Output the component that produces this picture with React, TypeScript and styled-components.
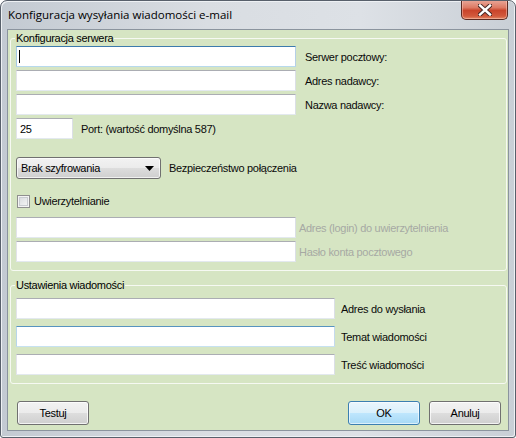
import styled, { createGlobalStyle, css } from 'styled-components'

const GlobalStyle = createGlobalStyle`
	html, body {
		margin: 0;
		padding: 0;
		background: #ffffff;
	}
	body {
		font-family: "Liberation Sans", Arial, sans-serif;
		font-size: 11px;
		letter-spacing: -0.3px;
		color: #000000;
	}
`

type BoxState = 'normal' | 'focus' | 'hover'

export default function App() {
	return (
		<>
			<GlobalStyle />
			<Window>
				<TitleBar>
					<TitleText>Konfiguracja wysyłania wiadomości e-mail</TitleText>
					<CloseBtn>
						<svg width='14' height='12' viewBox='0 0 14 12'>
							<path d='M2 1.5 L12 10.5 M12 1.5 L2 10.5' stroke='#4a2a26' strokeWidth='4.4' strokeLinecap='square' />
							<path d='M2 1.5 L12 10.5 M12 1.5 L2 10.5' stroke='#ffffff' strokeWidth='2.4' strokeLinecap='square' />
						</svg>
					</CloseBtn>
				</TitleBar>
				<Client>
					<Group $top={1}>
						<Legend>Konfiguracja serwera</Legend>
						<Row $gap={9}>
							<TextBox $w={280} $state='focus'>
								<Caret />
							</TextBox>
							<Label>Serwer pocztowy:</Label>
						</Row>
						<Row $gap={9} $mt={3}>
							<TextBox $w={280} />
							<Label>Adres nadawcy:</Label>
						</Row>
						<Row $gap={9} $mt={3}>
							<TextBox $w={280} />
							<Label>Nazwa nadawcy:</Label>
						</Row>
						<Row $gap={8} $mt={3}>
							<TextBox $w={57}>25</TextBox>
							<Label>Port: (wartość domyślna 587)</Label>
						</Row>
						<Row $gap={8} $mt={18}>
							<Combo>
								<span>Brak szyfrowania</span>
								<svg width='9' height='5' viewBox='0 0 9 5'>
									<path d='M0 0 H9 L4.5 5 Z' fill='#000000' />
								</svg>
							</Combo>
							<Label>Bezpieczeństwo połączenia</Label>
						</Row>
						<Row $gap={4} $mt={15}>
							<CheckBox />
							<Label>Uwierzytelnianie</Label>
						</Row>
						<Row $gap={3} $mt={9}>
							<TextBox $w={280} />
							<Label $disabled>Adres (login) do uwierzytelnienia</Label>
						</Row>
						<Row $gap={3} $mt={3}>
							<TextBox $w={280} />
							<Label $disabled>Hasło konta pocztowego</Label>
						</Row>
					</Group>
					<Group $top={6} $mt={8}>
						<Legend>Ustawienia wiadomości</Legend>
						<Row $gap={6}>
							<TextBox $w={319} />
							<Label>Adres do wysłania</Label>
						</Row>
						<Row $gap={6} $mt={7}>
							<TextBox $w={319} $state='hover' />
							<Label>Temat wiadomości</Label>
						</Row>
						<Row $gap={6} $mt={7}>
							<TextBox $w={319} />
							<Label>Treść wiadomości</Label>
						</Row>
					</Group>
					<ButtonBar>
						<Button>Testuj</Button>
						<ButtonGroup>
							<Button $primary>OK</Button>
							<Button>Anuluj</Button>
						</ButtonGroup>
					</ButtonBar>
				</Client>
			</Window>
		</>
	)
}

const Window = styled.div`
	width: 516px;
	height: 438px;
	box-sizing: border-box;
	display: flex;
	flex-direction: column;
	border: 1px solid #58606b;
	border-radius: 7px 7px 3px 3px;
	padding: 0 6px 6px;
	background: linear-gradient(to right, #c3cad2 0%, #d9dde2 40%, #dde1e6 70%, #c9cfd6 100%);
	box-shadow: inset 1px 1px 0 #eef1f4, inset -1px -1px 0 #eef1f4;
	overflow: hidden;
`

const TitleBar = styled.div`
	height: 28px;
	display: flex;
	align-items: flex-start;
	flex-shrink: 0;
`

const TitleText = styled.div`
	margin: 6px 0 0 1px;
	font-family: "Open Sans", "Noto Sans", sans-serif;
	font-size: 11.5px;
	letter-spacing: 0;
	line-height: 16px;
	color: #000000;
	white-space: nowrap;
`

const CloseBtn = styled.div`
	margin: -1px 1px 0 auto;
	width: 47px;
	height: 20px;
	box-sizing: border-box;
	display: flex;
	align-items: center;
	justify-content: center;
	border: 1px solid #5b2a22;
	border-top: none;
	border-radius: 0 0 5px 5px;
	background: linear-gradient(to bottom, #e9a99b 0%, #dd7a64 40%, #c9442b 55%, #d2593c 85%, #e48a66 100%);
	box-shadow: inset 0 0 0 1px rgba(255, 210, 200, 0.45);
`

const Client = styled.div`
	flex: 1;
	display: flex;
	flex-direction: column;
	border: 1px solid #8b949e;
	background: #d6e5c3;
	padding-top: 2px;
`

const Group = styled.fieldset<{ $top: number; $mt?: number }>`
	margin: ${(p) => p.$mt ?? 0}px 1px 0 2px;
	padding: ${(p) => p.$top}px 5px 8px;
	border: 1px solid #f6f9f2;
	border-radius: 3px;
	min-width: 0;
	display: flex;
	flex-direction: column;
`

const Legend = styled.legend`
	padding: 0 1px;
	margin-left: -1px;
	font-size: 11px;
	line-height: 13px;
`

const Row = styled.div<{ $gap: number; $mt?: number }>`
	display: flex;
	align-items: center;
	gap: ${(p) => p.$gap}px;
	margin-top: ${(p) => p.$mt ?? 0}px;
`

const boxBorders = {
	normal: css`
		border-color: #abadb3 #dbdfe6 #e3e9ef #e2e3ea;
	`,
	focus: css`
		border-color: #3d7bad #b5cfe7 #b7d9ed #a4c9e3;
	`,
	hover: css`
		border-color: #5794bf #c5daed #c7e2f1 #b7d5ea;
	`,
}

const TextBox = styled.div<{ $w: number; $state?: BoxState }>`
	width: ${(p) => p.$w}px;
	height: 21px;
	box-sizing: border-box;
	border: 1px solid;
	${(p) => boxBorders[p.$state ?? 'normal']}
	background: #ffffff;
	padding: 0 3px;
	display: flex;
	align-items: center;
	font-size: 11px;
`

const Caret = styled.span`
	display: block;
	width: 1px;
	height: 13px;
	margin-left: -1px;
	background: #000000;
`

const Label = styled.span<{ $disabled?: boolean }>`
	font-size: 11px;
	line-height: 13px;
	padding-top: 1px;
	white-space: nowrap;
	color: ${(p) => (p.$disabled ? '#a6a9a3' : '#0a0a0a')};
`

const Combo = styled.div`
	width: 145px;
	height: 22px;
	box-sizing: border-box;
	display: flex;
	align-items: center;
	justify-content: space-between;
	padding: 0 6px 0 4px;
	border: 1px solid #707070;
	border-radius: 3px;
	background: linear-gradient(to bottom, #f2f2f2 0%, #ebebeb 50%, #dddddd 51%, #cfcfcf 100%);
	box-shadow: inset 0 0 0 1px rgba(255, 255, 255, 0.7);
	font-size: 11px;
`

const CheckBox = styled.div`
	width: 13px;
	height: 13px;
	margin-left: 1px;
	box-sizing: border-box;
	border: 1px solid #8f8f8f;
	background: linear-gradient(135deg, #d4d7db 0%, #eeeff0 70%, #fafafa 100%);
	box-shadow: inset 0 0 0 1px #f4f4f4, inset 0 0 0 2px #c9ccd1;
`

const ButtonBar = styled.div`
	display: flex;
	justify-content: space-between;
	margin-top: 17px;
	padding: 0 7px 0 9px;
`

const ButtonGroup = styled.div`
	display: flex;
	gap: 9px;
`

const Button = styled.button<{ $primary?: boolean }>`
	width: 72px;
	height: 24px;
	box-sizing: border-box;
	padding: 0;
	font-family: "Liberation Sans", Arial, sans-serif;
	font-size: 11px;
	letter-spacing: -0.3px;
	color: #000000;
	border: 1px solid ${(p) => (p.$primary ? '#3c7fb1' : '#707070')};
	border-radius: 3px;
	background: ${(p) =>
		p.$primary
			? 'linear-gradient(to bottom, #eaf6fd 0%, #d9f0fc 50%, #bee6fd 51%, #a7d9f5 100%)'
			: 'linear-gradient(to bottom, #f2f2f2 0%, #ebebeb 50%, #dddddd 51%, #cfcfcf 100%)'};
	box-shadow: inset 0 0 0 1px ${(p) => (p.$primary ? 'rgba(255, 255, 255, 0.6)' : 'rgba(255, 255, 255, 0.75)')};
`
